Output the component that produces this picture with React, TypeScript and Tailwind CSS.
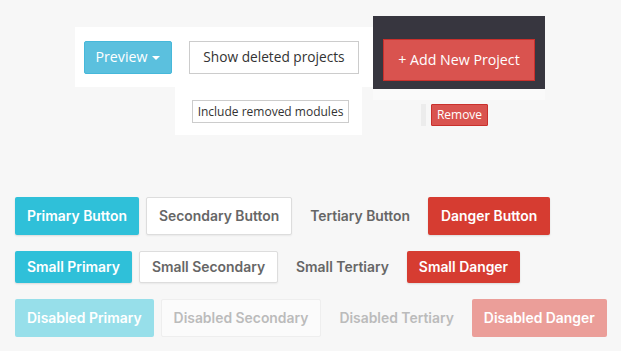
import React from "react";

const top = { fontFamily: '"Open Sans", "Liberation Sans", sans-serif' };
const btm = { fontFamily: 'Inter, "Liberation Sans", sans-serif' };

export default function App() {
  return (
    <div className="w-[621px] h-[351px] bg-[#f7f7f7] overflow-hidden flex flex-col">
      <div className="flex items-start ml-[75px] mt-[16px]" style={top}>
        <div className="flex flex-col w-[298px] mt-[11px]">
          <div className="bg-white h-[60px] flex items-center pl-[9px] gap-[17px]">
            <button className="h-[33px] w-[88px] bg-[#5bc0de] border border-[#46b8da] rounded-[2px] text-white text-[14.2px] flex items-center justify-center gap-[5px]">
              <span>Preview</span>
              <span className="w-0 h-0 border-l-[4px] border-r-[4px] border-t-[4px] border-l-transparent border-r-transparent border-t-white mt-[1px]" />
            </button>
            <button className="h-[33px] w-[170px] bg-white border border-[#cccccc] text-[#333] text-[13.7px] flex items-center justify-center">
              Show deleted projects
            </button>
          </div>
          <div className="bg-white ml-[100px] w-[187px] h-[48px] pl-[17px] pt-[13px]">
            <div className="h-[23px] w-[157px] border border-[#cccccc] text-[12px] text-[#333] flex items-center justify-center">
              Include removed modules
            </div>
          </div>
        </div>
        <div className="flex flex-col w-[172px]">
          <div className="bg-[#37363f] h-[73px] pl-[10px] pt-[23px]">
            <button className="h-[42px] w-[152px] bg-[#d9534f] border border-[#c9302c] text-white text-[14.2px] flex items-center justify-center">
              + Add New Project
            </button>
          </div>
          <div className="h-[11px] bg-[#fafafa]" />
          <div className="flex items-center mt-[4px] ml-[48px]">
            <div className="w-[5px] h-[22px] bg-[#ececec]" />
            <button className="ml-[5px] h-[22px] w-[57px] bg-[#d9534f] border border-[#c9302c] rounded-[1px] text-white text-[12px] flex items-center justify-center">
              Remove
            </button>
          </div>
        </div>
      </div>

      <div className="flex flex-col ml-[15px] mt-[62px] gap-[16px] text-[13.9px] font-semibold" style={btm}>
        <div className="flex items-center gap-[7px]">
          <button className="h-[38px] px-[12px] bg-[#2fc0d9] text-white rounded-[2px] shadow-[0_1px_2px_rgba(0,0,0,0.12)]">Primary Button</button>
          <button className="h-[38px] px-[12px] bg-white text-[#666] border border-[#dddddd] rounded-[2px] shadow-[0_1px_2px_rgba(0,0,0,0.06)]">Secondary Button</button>
          <button className="h-[38px] px-[11px] text-[#666]">Tertiary Button</button>
          <button className="h-[38px] px-[13px] bg-[#d63c31] text-white rounded-[2px] shadow-[0_1px_2px_rgba(0,0,0,0.12)]">Danger Button</button>
        </div>
        <div className="flex items-center gap-[7px]">
          <button className="h-[32px] px-[12px] bg-[#2fc0d9] text-white rounded-[2px] shadow-[0_1px_2px_rgba(0,0,0,0.12)]">Small Primary</button>
          <button className="h-[32px] px-[12px] bg-white text-[#666] border border-[#dddddd] rounded-[2px] shadow-[0_1px_2px_rgba(0,0,0,0.06)]">Small Secondary</button>
          <button className="h-[32px] px-[11px] text-[#666]">Small Tertiary</button>
          <button className="h-[32px] px-[12px] bg-[#d63c31] text-white rounded-[2px] shadow-[0_1px_2px_rgba(0,0,0,0.12)]">Small Danger</button>
        </div>
        <div className="flex items-center gap-[7px]">
          <button className="h-[38px] px-[12px] bg-[#97dfea] text-white rounded-[2px]">Disabled Primary</button>
          <button className="h-[38px] px-[12px] bg-[#fbfbfb] text-[#bbbbbb] border border-[#eeeeee] rounded-[2px]">Disabled Secondary</button>
          <button className="h-[38px] px-[11px] text-[#bbbbbb]">Disabled Tertiary</button>
          <button className="h-[38px] px-[12px] bg-[#eb9e99] text-white rounded-[2px]">Disabled Danger</button>
        </div>
      </div>
    </div>
  );
}
